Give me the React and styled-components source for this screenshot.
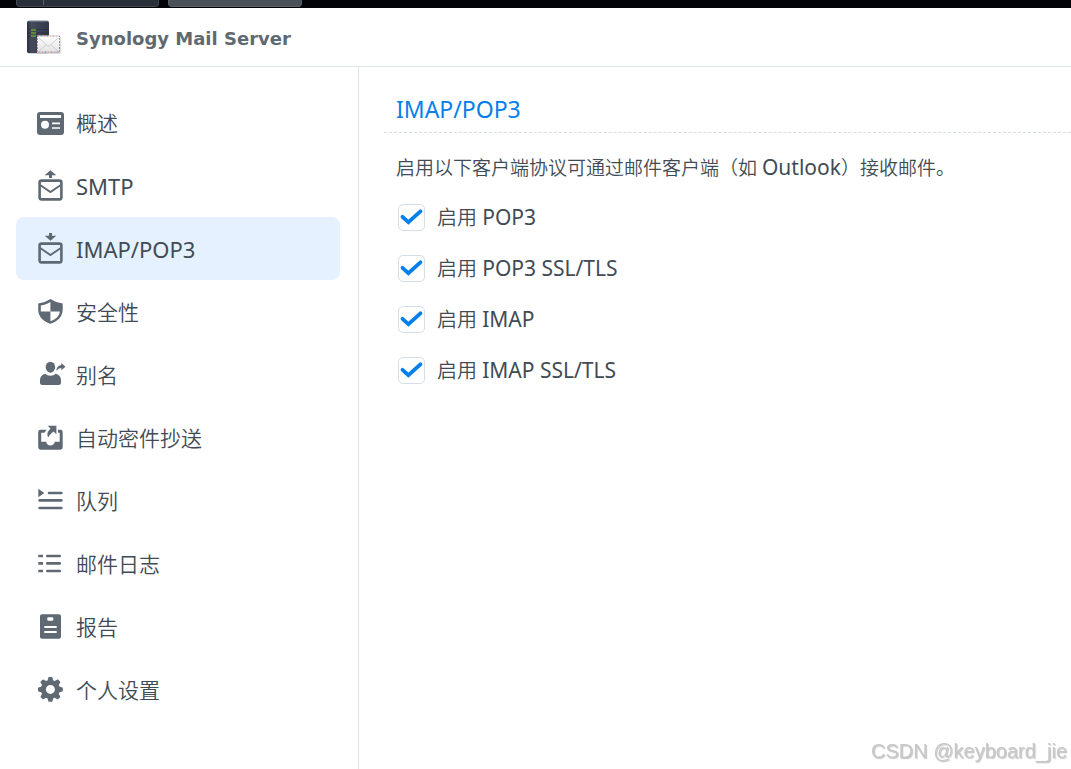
import React, { useState } from "react";
import styled, { createGlobalStyle } from "styled-components";

const GlobalStyle = createGlobalStyle`
  * {
    box-sizing: border-box;
  }
  body {
    margin: 0;
    background: #fff;
    color: #414b55;
    font-family: "Noto Sans", "Noto Sans CJK SC", sans-serif;
  }
`;

const Page = styled.div`
  display: flex;
  flex-direction: column;
  min-height: 100vh;
`;

const Taskbar = styled.div`
  display: flex;
  gap: 9px;
  height: 8px;
  padding: 0 16px;
  background: #030408;
`;

const TaskTab = styled.div`
  width: ${(p) => p.$width}px;
  height: 7px;
  padding-left: 26px;
  border: 1px solid ${(p) => (p.$active ? "#5a626a" : "#414851")};
  border-top: 0;
  border-radius: 0 0 4px 4px;
  background: ${(p) => (p.$active ? "#4a5159" : "#282f38")};
`;

const TabDivider = styled.div`
  width: 1px;
  height: 5px;
  background: #5a626a;
`;

const Header = styled.header`
  display: flex;
  align-items: center;
  gap: 15px;
  height: 59px;
  padding: 0 27px;
  border-bottom: 1px solid #dce5ec;
`;

const AppTitle = styled.h1`
  margin: 0;
  padding-top: 4px;
  color: #5f6972;
  font: bold 18px/24px "DejaVu Sans", sans-serif;
`;

const Body = styled.div`
  display: flex;
  flex: 1;
`;

const Sidebar = styled.nav`
  flex: none;
  width: 359px;
  padding: 24px 18px 24px 16px;
  border-right: 1px solid #dce5ec;
`;

const NavItem = styled.a`
  display: flex;
  align-items: center;
  gap: 12px;
  height: 63px;
  padding: 0 20px;
  border-radius: 8px;
  background: ${(p) => (p.$active ? "#e5f1fe" : "transparent")};
  color: #414b55;
  font-size: ${(p) => (p.$latin ? 22 : 21)}px;
  font-weight: ${(p) => (p.$latin ? 400 : 350)};
  line-height: 30px;
  text-decoration: none;
`;

const Glyph = styled.svg`
  flex: none;
  overflow: visible;
  color: #5f6973;
`;

const Main = styled.main`
  flex: 1;
  min-width: 0;
  padding: 24px 0 24px 25px;
`;

const SectionTitle = styled.h2`
  margin: 0;
  padding: 0 12px 4px;
  border-bottom: 1px dashed #d5dde5;
  color: #057feb;
  font-size: 23px;
  font-weight: 400;
  line-height: 37px;
`;

const Description = styled.p`
  margin: 0;
  padding: 19px 12px 0;
  font-size: 19px;
  font-weight: 350;
  line-height: 30px;
`;

const Latin = styled.span`
  font-size: 21px;
  font-weight: 400;
`;

const OptionList = styled.div`
  display: flex;
  flex-direction: column;
  padding: 9px 14px;
`;

const Option = styled.label`
  display: flex;
  align-items: center;
  gap: 12px;
  height: 51px;
  font-size: 20px;
  font-weight: 350;
  line-height: 30px;
`;

const CheckCell = styled.span`
  display: grid;
  width: 27px;
  height: 27px;

  > * {
    grid-area: 1 / 1;
  }
  svg {
    pointer-events: none;
  }
`;

const CheckInput = styled.input`
  appearance: none;
  width: 27px;
  height: 27px;
  margin: 0;
  border: 1px solid #d3dee8;
  border-radius: 5px;
  background: #fff;
`;

const Watermark = styled.div`
  position: fixed;
  right: 4px;
  bottom: 6px;
  color: #c8c8c8;
  font: 20px/24px "Liberation Sans", sans-serif;
  text-shadow: 1px 1px 1px #c4c4c4;
`;

const Logo = () => (
  <svg width="34" height="34" viewBox="0 0 34 34" aria-hidden="true">
    <defs>
      <linearGradient id="server" x1="0" x2="1">
        <stop offset="0" stopColor="#2a3140" />
        <stop offset="0.2" stopColor="#454b5b" />
        <stop offset="1" stopColor="#30384a" />
      </linearGradient>
      <linearGradient id="paper" x1="0" y1="0" x2="0" y2="1">
        <stop offset="0" stopColor="#ffffff" />
        <stop offset="1" stopColor="#e3e3e3" />
      </linearGradient>
    </defs>
    <rect x="0" y="0.8" width="22" height="32.4" rx="2" fill="url(#server)" />
    <path d="M1.500 1.300h19" stroke="#71798a" />
    <path d="M1 9.500h20M1 13h20M1 16.500h20" stroke="#262d3b" strokeWidth="0.700" />
    <path d="M4 10h5M4 13h5M4 16h5" stroke="#6fa52e" strokeWidth="1.400" />
    <rect x="10" y="16" width="23.500" height="17.500" rx="1" fill="#b9bbc0" />
    <rect x="10" y="15.500" width="23" height="17" rx="1" fill="url(#paper)" />
    <rect
      x="10.500"
      y="16"
      width="22"
      height="16"
      fill="none"
      stroke="#e38b74"
      strokeDasharray="2 4"
    />
    <rect
      x="10.500"
      y="16"
      width="22"
      height="16"
      fill="none"
      stroke="#7b8aa8"
      strokeDasharray="2 4"
      strokeDashoffset="3"
    />
    <path
      d="M12 31l7-6M31 31l-7-6M12 18l8 7.500q1.500 1.200 3 0L31 18"
      fill="none"
      stroke="#cfcfcf"
    />
  </svg>
);

const Envelope = () => (
  <g fill="none" stroke="currentColor">
    <rect x="3.600" y="10.600" width="21.800" height="18.800" rx="1.800" strokeWidth="2.600" />
    <path d="M4.500 15.200L14.400 22L24.500 15.200" strokeWidth="1.900" />
  </g>
);

const ICONS = {
  overview: (
    <>
      <rect x="1" y="5" width="27" height="23" rx="3" fill="currentColor" />
      <path d="M4 8h21v3H4z" fill="#fff" />
      <circle cx="9" cy="17.700" r="4" fill="#fff" />
      <path d="M16 16.300h8M16 21h8" stroke="#fff" strokeWidth="1.700" />
    </>
  ),
  smtp: (
    <>
      <path d="M14.400 0.300L20.300 5.300H16V8H13V5.300H8.600z" fill="currentColor" />
      <Envelope />
    </>
  ),
  imap: (
    <>
      <path d="M13 0h3v2.700h4.300L14.500 7.700L8.700 2.700H13z" fill="currentColor" />
      <Envelope />
    </>
  ),
  security: (
    <>
      <path
        d="M14.400 3C11 5.300 6.500 7 2.200 7.400V13.500C2.200 20.500 7 25.500 14.400 27.800C21.800 25.500 26.700 20.500 26.700 13.500V7.400C22.300 7 17.800 5.300 14.400 3z"
        fill="currentColor"
      />
      <path
        d="M14.400 6V15.400H4.800V9.600C8.400 9 11.500 7.700 14.400 6zM14.400 15.400H23.900C23.300 20 19.900 23.300 14.400 25.200z"
        fill="#fff"
      />
    </>
  ),
  alias: (
    <g fill="currentColor">
      <ellipse cx="14.400" cy="8.200" rx="4.700" ry="5.500" />
      <path d="M9.500 14.800C11 17.300 18 17.300 19.500 14.800C23 15.500 25 17.800 25 21V23.500Q25 26 22.500 26H6.500Q4 26 4 23.500V21C4 17.800 6 15.500 9.500 14.800z" />
      <path d="M20.300 12C20.500 9 22 6.600 25.300 6.100V4L29.500 7.700L25.300 11.300V9C23.300 9 21.800 10 20.300 12z" />
    </g>
  ),
  bcc: (
    <g fill="currentColor">
      <path
        fillRule="evenodd"
        d="M10.500 7.700H4.500Q2.200 7.700 2.200 10V25.300Q2.200 27.700 4.500 27.700H24.400Q26.700 27.700 26.700 25.300V10Q26.700 7.700 24.400 7.700H22V10.700H23.700V19.700H18.700C18.200 24.700 10.700 24.700 10.200 19.700H5.200V10.700H8.500z"
      />
      <path d="M11.700 3.700H20.400V12.200L17.700 9.600C15.500 11.300 13.300 13 12.500 15.300C10.300 12.700 11.500 9.500 14.500 6.500z" />
    </g>
  ),
  queue: (
    <g fill="currentColor" stroke="currentColor" strokeLinecap="round">
      <path d="M2.300 3.700L8.300 8L2.300 12.300z" stroke="none" />
      <path d="M13 8H25.400M3.600 15.400H25.400M3.600 23H25.400" strokeWidth="2.600" />
    </g>
  ),
  log: (
    <g stroke="currentColor" strokeWidth="2.600">
      <path d="M2.300 8H7M2.300 15.400H7M2.300 23H7" />
      <path d="M11.300 8H23.700M11.300 15.400H23.700M11.300 23H23.700" strokeLinecap="round" />
    </g>
  ),
  report: (
    <>
      <rect x="4" y="3.300" width="21" height="24.400" rx="2" fill="currentColor" />
      <rect x="11.300" y="6.300" width="6" height="3.400" rx="1" fill="#fff" />
      <path d="M8.300 16H20.700M8.300 21H20.700" stroke="#fff" strokeWidth="1.800" />
    </>
  ),
  personal: (
    <>
      <circle cx="14.400" cy="15.400" r="7" fill="none" stroke="currentColor" strokeWidth="5" />
      {[0, 45, 90, 135, 180, 225, 270, 315].map((deg) => (
        <path
          key={deg}
          d="M11.400 7L12.400 3.500Q12.600 3 13.100 3H15.700Q16.200 3 16.400 3.500L17.400 7z"
          fill="currentColor"
          transform={`rotate(${deg} 14.4 15.4)`}
        />
      ))}
    </>
  ),
};

const NAV = [
  { id: "overview", label: "概述" },
  { id: "smtp", label: "SMTP", latin: true },
  { id: "imap", label: "IMAP/POP3", latin: true },
  { id: "security", label: "安全性" },
  { id: "alias", label: "别名" },
  { id: "bcc", label: "自动密件抄送" },
  { id: "queue", label: "队列" },
  { id: "log", label: "邮件日志" },
  { id: "report", label: "报告" },
  { id: "personal", label: "个人设置" },
];

const PROTOCOLS = ["POP3", "POP3 SSL/TLS", "IMAP", "IMAP SSL/TLS"];

const ProtocolOption = ({ name }) => {
  const [checked, setChecked] = useState(true);
  return (
    <Option>
      <CheckCell>
        <CheckInput
          type="checkbox"
          checked={checked}
          onChange={(e) => setChecked(e.target.checked)}
        />
        {checked && (
          <svg width="27" height="27" viewBox="0 0 27 27" aria-hidden="true">
            <path
              d="M4.500 12.800L10.400 18.200L22.400 7.300"
              fill="none"
              stroke="#057feb"
              strokeWidth="3.800"
              strokeLinecap="round"
            />
          </svg>
        )}
      </CheckCell>
      <span>
        启用 <Latin>{name}</Latin>
      </span>
    </Option>
  );
};

export default function App() {
  const [active, setActive] = useState("imap");

  return (
    <Page>
      <GlobalStyle />
      <Taskbar>
        <TaskTab $width={143}>
          <TabDivider />
        </TaskTab>
        <TaskTab $width={134} $active />
      </Taskbar>
      <Header>
        <Logo />
        <AppTitle>Synology Mail Server</AppTitle>
      </Header>
      <Body>
        <Sidebar>
          {NAV.map((item) => (
            <NavItem
              key={item.id}
              href={`#${item.id}`}
              $active={item.id === active}
              $latin={item.latin}
              onClick={() => setActive(item.id)}
            >
              <Glyph width="28" height="31" viewBox="0 0 28 31" aria-hidden="true">
                {ICONS[item.id]}
              </Glyph>
              {item.label}
            </NavItem>
          ))}
        </Sidebar>
        <Main>
          <SectionTitle>IMAP/POP3</SectionTitle>
          <Description>
            启用以下客户端协议可通过邮件客户端（如 <Latin>Outlook</Latin>）接收邮件。
          </Description>
          <OptionList>
            {PROTOCOLS.map((name) => (
              <ProtocolOption key={name} name={name} />
            ))}
          </OptionList>
        </Main>
      </Body>
      <Watermark>CSDN @keyboard_jie</Watermark>
    </Page>
  );
}
